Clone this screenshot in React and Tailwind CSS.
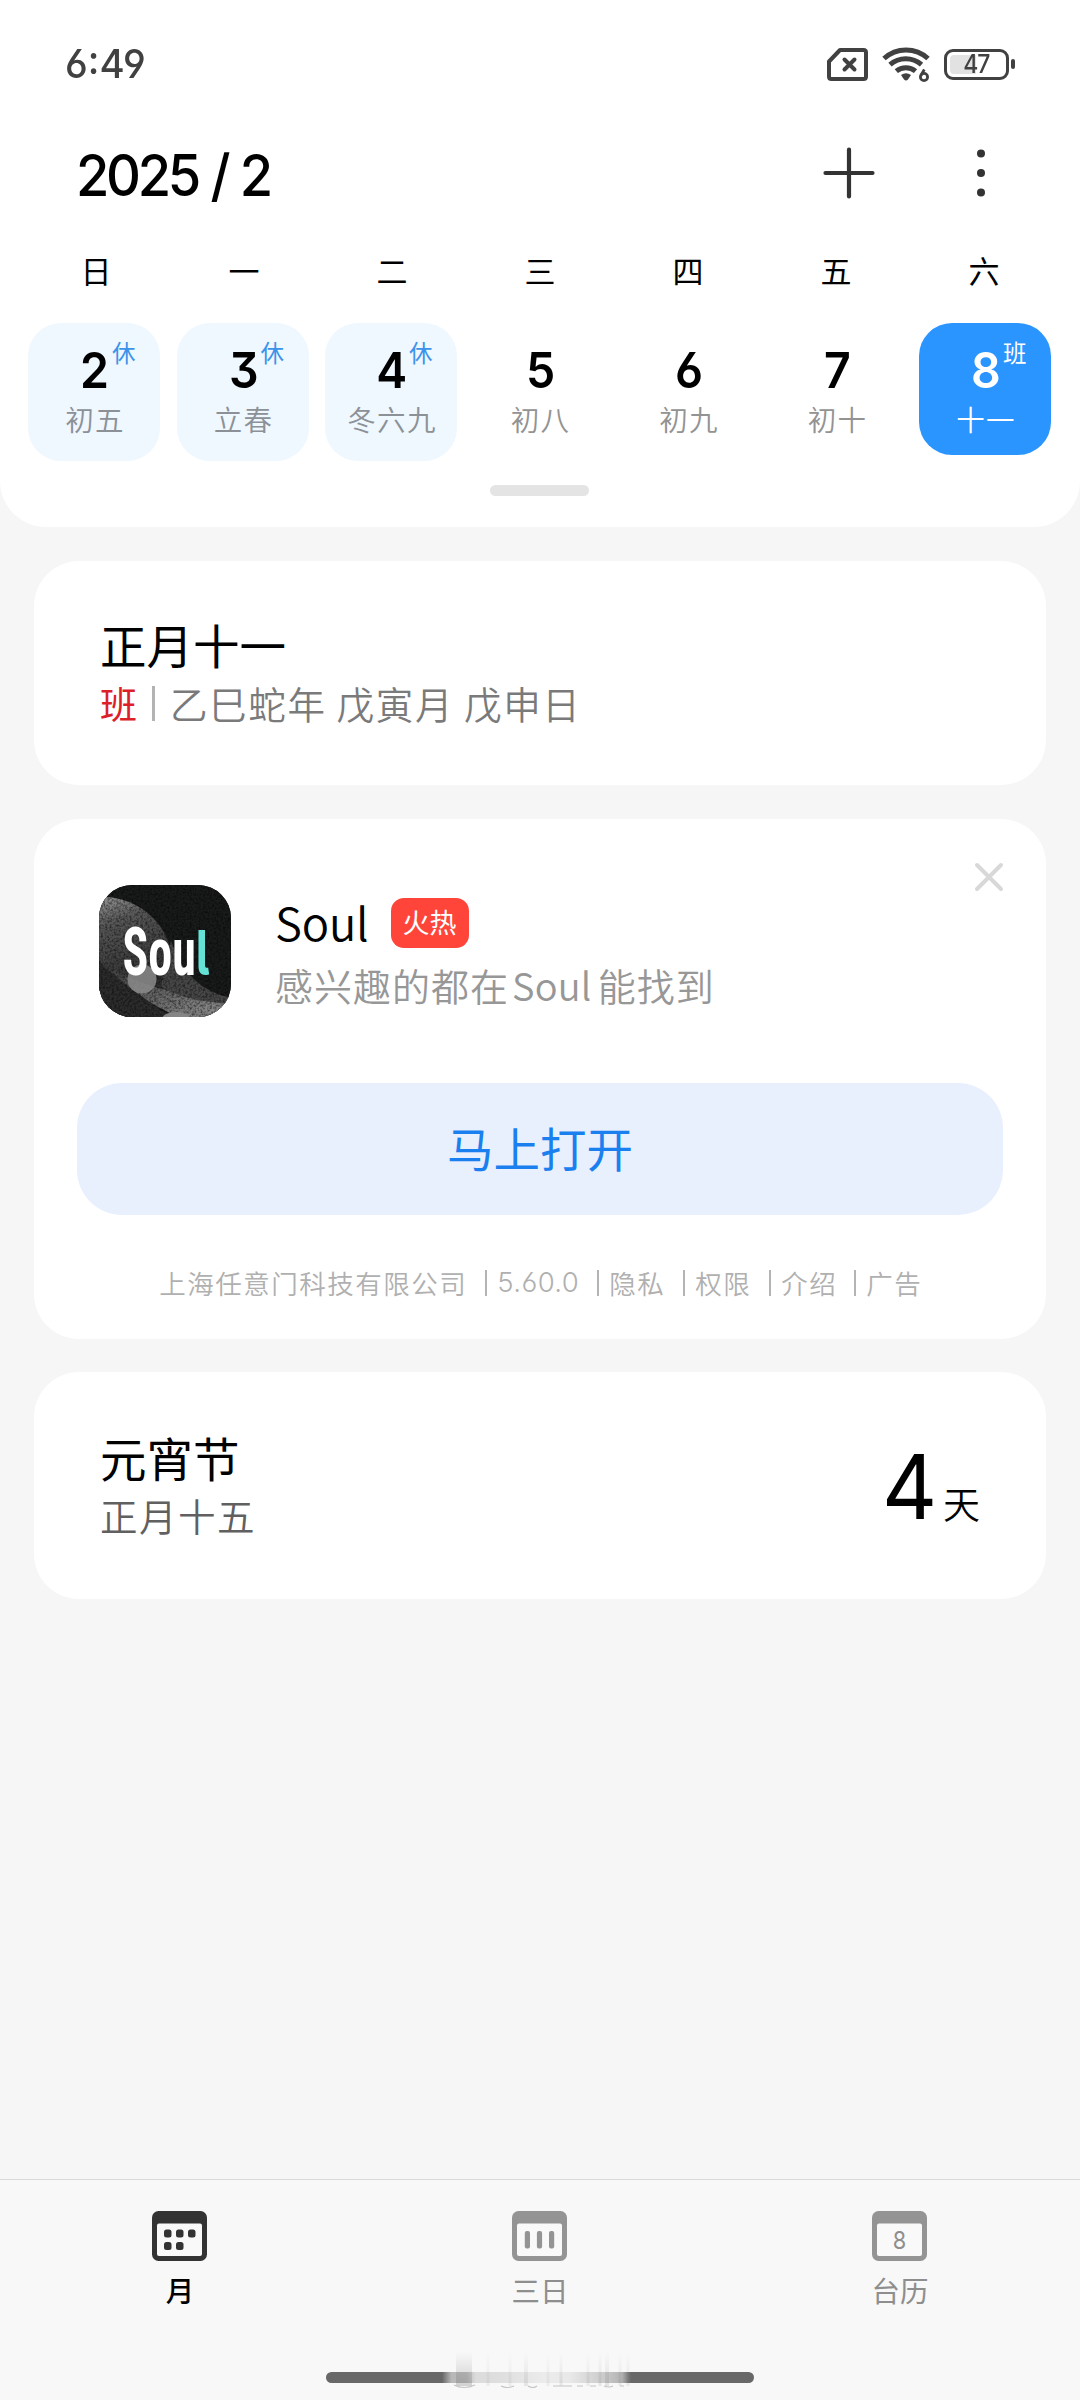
import React from "react";

const DIGITS = "inline-block whitespace-nowrap font-['Inter','Noto_Sans_CJK_SC',sans-serif] [font-feature-settings:'cv03','cv04','cv09']";

const WEEKDAYS = ["日", "一", "二", "三", "四", "五", "六"];

const DAYS = [
  { n: "2", lunar: "初五", tag: "休" },
  { n: "3", lunar: "立春", tag: "休" },
  { n: "4", lunar: "冬六九", tag: "休" },
  { n: "5", lunar: "初八" },
  { n: "6", lunar: "初九" },
  { n: "7", lunar: "初十" },
  { n: "8", lunar: "十一", tag: "班", active: true },
];

function SimIcon() {
  return (
    <svg width="41" height="33" viewBox="0 0 41 33" fill="none" stroke="#414141" strokeWidth="4" strokeLinejoin="round" strokeLinecap="round">
      <path d="M13 2H36.5Q39 2 39 4.500V28.500Q39 31 36.500 31H4.500Q2 31 2 28.500V13.500Z" />
      <path d="M17.500 11.500L27.500 21.500M27.500 11.500L17.500 21.500" />
    </svg>
  );
}

function WifiIcon() {
  return (
    <svg width="48" height="38" viewBox="0 0 48 38" fill="none" stroke="#414141" strokeWidth="5">
      <path d="M2 13.500A32.500 32.500 0 0 1 46 13.500" />
      <path d="M8 19.700A24 24 0 0 1 39.500 19.700" />
      <path d="M14.300 26.200A15 15 0 0 1 33.500 26.200" />
      <path d="M19 30Q24 26.500 29 30L26 34.500Q24 36.500 22 34.500Z" fill="#414141" stroke="none" />
      <circle cx="42" cy="32" r="3.600" strokeWidth="2.800" />
      <path d="M42.300 24.500L39 30.200" strokeWidth="2.800" />
    </svg>
  );
}

function Battery() {
  return (
    <div className="flex items-center gap-[2px]">
      <div className="flex h-[31px] w-[65px] items-center rounded-[9px] border-[3px] border-[#414141] p-[3px]">
        <div className="relative h-full w-full">
          <div className="h-full w-[26px] rounded-l-[4px] bg-[#e2e2e2]" />
          <span className="absolute inset-0 flex items-center justify-center font-['Inter',sans-serif] text-[25px] leading-none font-medium tracking-[-1px] text-[#414141]">
            <span className="inline-block scale-x-[0.92]">47</span>
          </span>
        </div>
      </div>
      <div className="h-[10px] w-[4px] rounded-[2px] bg-[#414141]" />
    </div>
  );
}

function NavIcon({ color, children }) {
  return (
    <svg width="55" height="50" viewBox="0 0 55 50">
      <rect width="55" height="50" rx="6.500" fill={color} />
      <rect x="5" y="12.500" width="45" height="32.500" rx="2" fill="#f9f9f9" />
      {children}
    </svg>
  );
}

function AppLogo() {
  return (
    <div className="h-[132px] w-[132px] shrink-0 overflow-hidden rounded-[33px] bg-[#161717]">
      <svg width="132" height="132" viewBox="0 0 132 132">
        <defs>
          <filter id="grain" x="0" y="0" width="100%" height="100%">
            <feTurbulence type="fractalNoise" baseFrequency="0.45" numOctaves="2" seed="4" />
            <feColorMatrix values="0 0 0 0 0  0 0 0 0 0  0 0 0 0 0  2.200 0 0 0 -0.850" />
          </filter>
          <linearGradient id="planet" x1="0.300" y1="0" x2="0.550" y2="0.700">
            <stop offset="0" stopColor="#a8a8a8" />
            <stop offset="0.350" stopColor="#585858" />
            <stop offset="1" stopColor="#2e2e2e" />
          </linearGradient>
          <linearGradient id="ring" x1="0" y1="0" x2="1" y2="0.800">
            <stop offset="0" stopColor="#333" />
            <stop offset="1" stopColor="#8a8a8a" />
          </linearGradient>
        </defs>
        <rect width="132" height="132" fill="#191a1a" />
        <circle cx="4" cy="82" r="70" fill="url(#planet)" />
        <path d="M0 74Q48 112 132 112V132H80Q40 116 0 74Z" fill="url(#ring)" />
        <path d="M72 56Q88 104 132 113V119Q84 116 62 102Z" fill="#474747" />
        <path d="M0 76Q30 108 74 132H0Z" fill="#2c2c2c" />
        <rect width="132" height="132" filter="url(#grain)" opacity="0.550" />
        <circle cx="43" cy="94" r="14.500" fill="#8b8b8b" opacity="0.850" />
        <ellipse cx="77" cy="134" rx="14" ry="7" fill="#858585" />
        <text x="23.500" y="89.500" className="font-['Roboto',sans-serif] text-[67px] font-bold [font-stretch:75%]" fill="#fff" textLength="87" lengthAdjust="spacingAndGlyphs">
          Sou<tspan className="font-['Inter',sans-serif] text-[62px] [font-feature-settings:'cv05']" fill="#64e2d6">l</tspan>
        </text>
      </svg>
    </div>
  );
}

function Sep() {
  return <span className="h-[26px] w-[2px] bg-[#b4b4b4]" />;
}

/* Faint vertical smears that fade out along the bottom edge of the home bar. */
const SMEARS = [
  [28, 16, 0.24], [52, 3, 0.08], [74, 3, 0.08], [90, 4, 0.12], [112, 3, 0.08], [125, 3, 0.12],
  [152, 3, 0.1], [164, 3, 0.12], [171, 4, 0.14], [184, 3, 0.1], [192, 3, 0.1],
];

function HomeBar() {
  return (
    <div className="relative mt-[60px] flex h-[11px] w-[428px] self-center">
      <div className="w-[116px] rounded-l-full bg-[#686868]" />
      <div className="flex-1 bg-[linear-gradient(90deg,#686868_0%,#b8b8b8_5%,#bcbcbc_13%,#dcdcdc_18%,#dedede_30%,#ececec_55%,#e8e8e8_68%,#cccccc_85%,#b4b4b4_95%,#686868_100%)]" />
      <div className="w-[123px] rounded-r-full bg-[#686868]" />
      <svg className="absolute top-[-24px] left-[108px]" width="206" height="44" viewBox="0 0 206 44" fill="none">
        <defs>
          <linearGradient id="smear" x1="0" y1="0" x2="0" y2="1">
            <stop offset="0" stopColor="#555" stopOpacity="0" />
            <stop offset="1" stopColor="#555" />
          </linearGradient>
        </defs>
        {SMEARS.map(([x, w, o]) => (
          <rect key={x} x={x - w / 2 + 2} y="4" width={w} height="34" fill="url(#smear)" opacity={o} />
        ))}
        <path d="M20 37Q30 42 41 37M67 38Q73 41 80 38M94 38Q99 41 103 38M119 38H138M143 38H149M156 38H162M170 38Q175 40 179 38M186 38H190" stroke="#c4c4c4" strokeWidth="1.200" />
      </svg>
    </div>
  );
}

export default function App() {
  return (
    <div className="flex h-[2400px] w-[1080px] flex-col overflow-hidden bg-[#f6f6f6] font-['Noto_Sans_CJK_SC',sans-serif] text-black">
      <header className="flex h-[527px] shrink-0 flex-col rounded-b-[46px] bg-white">
        <div className="mt-[40px] flex h-[48px] items-center justify-between pr-[65px] pl-[65px]">
          <span className={`${DIGITS} origin-left scale-x-[0.960] text-[40px] leading-[48px] font-medium text-[#414141]`}>6:49</span>
          <div className="flex items-center gap-[14px]">
            <SimIcon />
            <WifiIcon />
            <Battery />
          </div>
        </div>

        <div className="mt-[48px] flex h-[74px] items-center justify-between pr-[91px] pl-[76px]">
          <h1 className={`${DIGITS} origin-left translate-y-[3px] scale-x-[0.950] text-[57px] leading-[74px] font-medium tracking-[-3.500px] [word-spacing:1.500px]`}>2025 / 2</h1>
          <div className="flex items-center gap-[98px]">
            <svg width="52" height="52" viewBox="0 0 52 52" stroke="#333" strokeWidth="4.200" strokeLinecap="round">
              <path d="M26 2.500V49.500M2.500 26H49.500" />
            </svg>
            <svg width="16" height="52" viewBox="0 0 16 52" fill="#333">
              <circle cx="8" cy="6.500" r="4" />
              <circle cx="8" cy="26" r="4" />
              <circle cx="8" cy="45.500" r="4" />
            </svg>
          </div>
        </div>

        <div className="mt-[38px] grid h-[44px] grid-cols-7 px-[22px]">
          {WEEKDAYS.map((d) => (
            <span key={d} className="text-center text-[31px] leading-[44px]">{d}</span>
          ))}
        </div>

        <div className="mt-[31px] flex h-[138px] items-start justify-between pr-[29px] pl-[28px]">
          {DAYS.map((d) => (
            <div
              key={d.n}
              className={
                "relative flex w-[132px] flex-col items-center rounded-[33px] pt-[21px] pl-[2px] " +
                (d.active ? "h-[132px] bg-[#2b95ff] text-white" : d.tag ? "h-[138px] bg-[#eff7ff]" : "h-[138px]")
              }
            >
              <span className={`${DIGITS} scale-x-[0.930] text-[50px] leading-[52px] font-semibold`}>{d.n}</span>
              <span className={"mt-[3px] text-[28.500px] leading-[40px] font-[350] tracking-[1.300px] whitespace-nowrap " + (d.active ? "text-white" : d.tag ? "text-[#8b9197]" : "text-[#939393]")}>
                {d.lunar}
              </span>
              {d.tag && (
                <span className={"absolute top-[12px] left-[84px] text-[23.500px] leading-[34px] " + (d.active ? "text-white" : "text-[#3b93ea]")}>
                  {d.tag}
                </span>
              )}
            </div>
          ))}
        </div>

        <div className="mt-[24px] mr-[1px] h-[11px] w-[99px] self-center rounded-full bg-[#e4e4e4]" />
      </header>

      <main className="flex flex-1 flex-col gap-[33px] px-[34px] pt-[34px]">
        <section className="flex h-[224px] flex-col rounded-[45px] bg-white pt-[53px] pl-[66px]">
          <h2 className="text-[46.500px] leading-[60px] font-normal">正月十一</h2>
          <div className="mt-[1px] flex h-[56px] items-center">
            <span className="text-[37px] leading-[56px] text-[#dc2028]">班</span>
            <span className="ml-[15px] h-[35px] w-[3px] bg-[#b3b3b3]" />
            <span className="ml-[15px] text-[37.500px] leading-[56px] font-[350] tracking-[1.650px] text-[#7a7a7a]">乙巳蛇年 戊寅月 戊申日</span>
          </div>
        </section>

        <section className="relative mt-[1px] flex h-[520px] flex-col rounded-[45px] bg-white px-[43px] pt-[66px]">
          <svg className="absolute top-[42px] right-[41px]" width="32" height="32" viewBox="0 0 32 32" stroke="#d8d8d8" strokeWidth="4" strokeLinecap="round">
            <path d="M4 4L28 28M28 4L4 28" />
          </svg>
          <div className="flex h-[132px] items-start pl-[22px]">
            <AppLogo />
            <div className="ml-[44px] flex flex-col pt-[6px]">
              <div className="flex h-[64px] items-center">
                <span className="pb-[3px] text-[45.500px] leading-[61px] font-[350] tracking-[-0.200px]">Soul</span>
                <span className="ml-[22px] flex h-[50px] w-[78px] items-center justify-center rounded-[13px] bg-[#ff453a] pb-[2px] text-[27px] leading-[48px] text-white">火热</span>
              </div>
              <p className="flex text-[38px] leading-[60px] font-[350] tracking-[1px] whitespace-nowrap text-[#979797]">
                <span>感兴趣的都在</span>
                <span className="mr-[6px] ml-[3px] tracking-[0.200px]">Soul</span>
                <span>能找到</span>
              </p>
            </div>
          </div>
          <button className="mt-[66px] flex h-[132px] w-full items-center justify-center rounded-[45px] bg-[#e8effd] pb-[5px] text-[46.500px] text-[#1a80ef]">
            马上打开
          </button>
          <div className="mt-[48px] flex h-[40px] items-center gap-[10px] self-center text-[26.500px] font-[350] tracking-[1.500px] whitespace-nowrap text-[#b0b0b0]">
            <span className="mr-[8px]">上海任意门科技有限公司</span>
            <Sep />
            <span className={`${DIGITS} mr-[8px] text-[27.500px] font-light tracking-[0.400px]`}>5.60.0</span>
            <Sep />
            <span className="mr-[8px]">隐私</span>
            <Sep />
            <span className="mr-[8px]">权限</span>
            <Sep />
            <span className="mr-[7px]">介绍</span>
            <Sep />
            <span className="mr-[-1.500px]">广告</span>
          </div>
        </section>

        <section className="flex h-[227px] items-start justify-between rounded-[45px] bg-white pr-[66px] pl-[66px]">
          <div className="flex flex-col pt-[55px]">
            <h2 className="text-[46.500px] leading-[60px] font-normal">元宵节</h2>
            <span className="text-[37.500px] leading-[56px] font-[350] tracking-[1.500px] text-[#606060]">正月十五</span>
          </div>
          <div className="flex items-baseline pt-[60px]">
            <span className={`${DIGITS} origin-right scale-x-[0.950] text-[90px] leading-[110px] font-normal`}>4</span>
            <span className="ml-[6px] text-[37px] leading-[50px] font-[350]">天</span>
          </div>
        </section>
      </main>

      <footer className="flex h-[221px] shrink-0 flex-col border-t-[1px] border-[#d9d9d9] bg-[#f8f8f8]">
        <nav className="grid grid-cols-3 pt-[31px]">
          <div className="flex flex-col items-center gap-[8px]">
            <div className="mr-[2px]">
              <NavIcon color="#333">
                {[[12, 18.500], [24, 18.500], [36, 18.500], [12, 31], [24, 31]].map(([x, y]) => (
                  <rect key={`${x}-${y}`} x={x} y={y} width="7.500" height="8" rx="2.500" fill="#333" />
                ))}
              </NavIcon>
            </div>
            <span className="text-[28.500px] leading-[42px] font-medium">月</span>
          </div>
          <div className="flex flex-col items-center gap-[8px]">
            <div className="mr-[2px]">
              <NavIcon color="#949494">
                {[12.800, 24.900, 37].map((x) => (
                  <rect key={x} x={x} y="20" width="5.200" height="17.500" rx="2" fill="#949494" />
                ))}
              </NavIcon>
            </div>
            <span className="text-[28.500px] leading-[42px] text-[#8e8e8e]">三日</span>
          </div>
          <div className="flex flex-col items-center gap-[8px]">
            <div className="mr-[2px]">
              <NavIcon color="#949494">
                <text x="27.500" y="37.500" textAnchor="middle" fontFamily="Inter, sans-serif" fontWeight="400" fontSize="24" fill="#8e8e8e" textLength="13.500" lengthAdjust="spacingAndGlyphs">8</text>
              </NavIcon>
            </div>
            <span className="text-[28.500px] leading-[42px] text-[#8e8e8e]">台历</span>
          </div>
        </nav>
        <div className="flex flex-col pt-[1px]">
          <HomeBar />
        </div>
      </footer>
    </div>
  );
}
